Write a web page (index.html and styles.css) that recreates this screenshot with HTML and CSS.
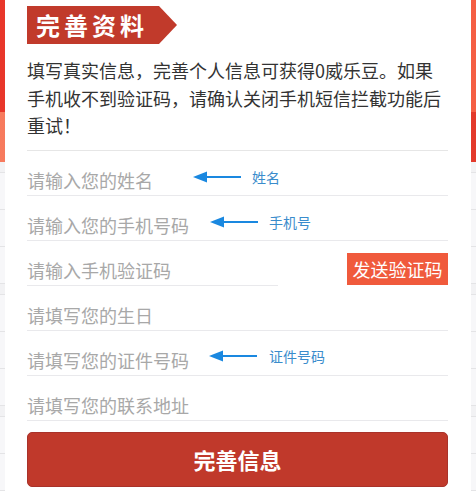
FILE: index.html
```html
<!DOCTYPE html>
<html lang="zh-CN">
<head>
<meta charset="utf-8">
<title>完善资料</title>
<link rel="stylesheet" href="styles.css">
</head>
<body>
<div class="page">
  <div class="page-head">
    <div class="band band-top"></div>
    <div class="band band-bottom"></div>
  </div>
  <ul class="page-list">
    <li></li><li></li><li></li>
  </ul>
  <ul class="page-list">
    <li></li><li></li><li></li>
  </ul>
  <ul class="page-list">
    <li></li><li></li>
  </ul>
</div>

<div class="dialog">
  <div class="banner">完善资料</div>
  <p class="intro">填写真实信息，完善个人信息可获得0威乐豆。如果手机收不到验证码，请确认关闭手机短信拦截功能后重试！</p>
  <div class="form">
    <div class="row">
      <span class="placeholder">请输入您的姓名</span>
      <div class="note note-name">
        <svg class="arrow" width="48" height="12" viewBox="0 0 48 12"><line x1="10" y1="6" x2="48" y2="6" stroke="#1a88e0" stroke-width="2.2"/><polygon points="0,6 14,0.5 14,11.5" fill="#1a88e0"/></svg>
        <span class="note-text">姓名</span>
      </div>
    </div>
    <div class="row">
      <span class="placeholder">请输入您的手机号码</span>
      <div class="note note-phone">
        <svg class="arrow" width="48" height="12" viewBox="0 0 48 12"><line x1="10" y1="6" x2="48" y2="6" stroke="#1a88e0" stroke-width="2.2"/><polygon points="0,6 14,0.5 14,11.5" fill="#1a88e0"/></svg>
        <span class="note-text">手机号</span>
      </div>
    </div>
    <div class="row row-code">
      <span class="placeholder code-input">请输入手机验证码</span>
      <span class="send-btn">发送验证码</span>
    </div>
    <div class="row">
      <span class="placeholder">请填写您的生日</span>
    </div>
    <div class="row">
      <span class="placeholder">请填写您的证件号码</span>
      <div class="note note-id">
        <svg class="arrow" width="48" height="12" viewBox="0 0 48 12"><line x1="10" y1="6" x2="48" y2="6" stroke="#1a88e0" stroke-width="2.2"/><polygon points="0,6 14,0.5 14,11.5" fill="#1a88e0"/></svg>
        <span class="note-text">证件号码</span>
      </div>
    </div>
    <div class="row">
      <span class="placeholder">请填写您的联系地址</span>
    </div>
    <div class="submit">完善信息</div>
  </div>
</div>
</body>
</html>
```

FILE: styles.css
```css
* { box-sizing: border-box; }

html, body {
  margin: 0;
  padding: 0;
  height: 100%;
  overflow: hidden;
}

body {
  position: relative;
  background: #f2f2f4;
  font-family: "Noto Sans CJK SC", "Noto Sans", sans-serif;
}

/* background page */
.page-head .band-top {
  height: 112px;
  background: linear-gradient(to right, #e8362a, #f55f44);
}
.page-head .band-bottom {
  height: 50px;
  background: linear-gradient(to right, #f77b5e, #e3392b);
}
.page-list {
  list-style: none;
  margin: 10px 0 0;
  padding: 0;
  background: #f7f7f9;
  border-top: 1px solid #e4e4e6;
}
.page-list li {
  height: 37px;
  border-bottom: 1px solid #e4e4e6;
}

/* dialog */
.dialog {
  position: absolute;
  left: 5px;
  top: 0;
  width: 466px;
  bottom: 0;
  background: #fff;
  padding: 6px 23px 0 22px;
}

.banner {
  width: 150px;
  height: 38px;
  background: #c13a2b;
  clip-path: polygon(0 0, 132px 0, 150px 50%, 132px 100%, 0 100%);
  color: #fff;
  font-size: 24px;
  font-weight: 700;
  line-height: 38px;
  letter-spacing: 4px;
  padding-left: 9px;
}

.intro {
  margin: 13px 0 0;
  font-size: 18px;
  line-height: 27.5px;
  color: #333;
  padding-bottom: 10px;
  border-bottom: 1px solid #e6e6e6;
}

.row {
  position: relative;
  height: 45px;
  padding-top: 17px;
  border-bottom: 1px solid #e9e9ec;
  font-size: 18px;
  line-height: 24px;
}

.placeholder {
  color: #a8a8a8;
}

.row-code {
  display: flex;
  align-items: flex-end;
  justify-content: space-between;
  padding-top: 0;
  border-bottom: none;
}
.code-input {
  width: 251px;
  height: 45px;
  padding-top: 17px;
  border-bottom: 1px solid #e9e9ec;
}
.send-btn {
  width: 101px;
  height: 32px;
  line-height: 32px;
  margin-bottom: 1px;
  text-align: center;
  background: #f05a3c;
  color: #fff;
  font-size: 18px;
}

.note {
  position: absolute;
  display: flex;
  align-items: center;
  height: 20px;
}
.note-name { left: 166px; top: 16px; gap: 11px; }
.note-phone { left: 183px; top: 16px; gap: 11px; }
.note-id { left: 182px; top: 15px; gap: 12px; }
.arrow { display: block; }
.note-text {
  font-size: 14px;
  line-height: 20px;
  color: #3a8ccc;
}

.submit {
  margin-top: 11px;
  height: 55px;
  line-height: 53px;
  background: #c0392b;
  border: 1px solid #a9322a;
  border-radius: 5px;
  color: #fff;
  text-align: center;
  font-size: 22px;
  font-weight: 700;
}
```
